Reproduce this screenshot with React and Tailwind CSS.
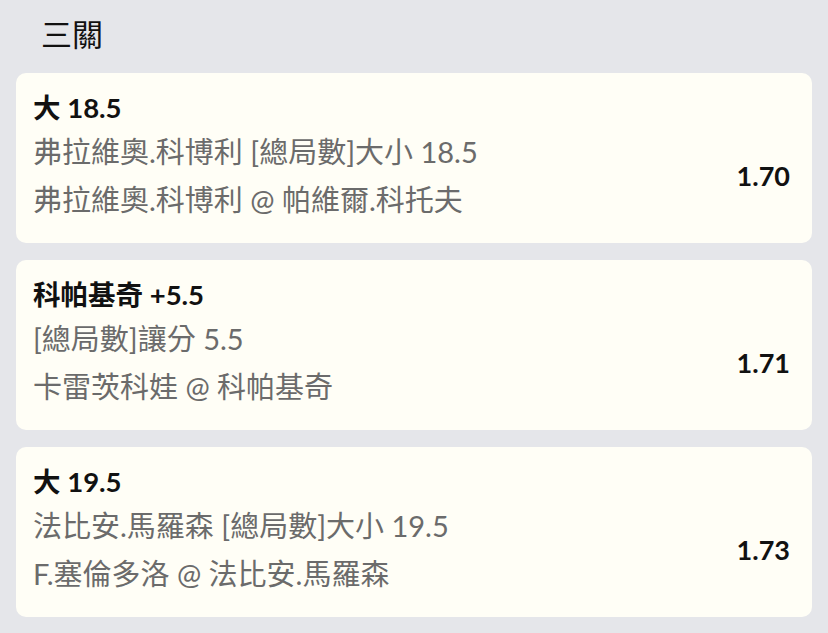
import React from 'react';

const bets = [
  {
    title: '大 18.5',
    market: '弗拉維奧.科博利 [總局數]大小 18.5',
    match: '弗拉維奧.科博利 @ 帕維爾.科托夫',
    odds: '1.70',
  },
  {
    title: '科帕基奇 +5.5',
    market: '[總局數]讓分 5.5',
    match: '卡雷茨科娃 @ 科帕基奇',
    odds: '1.71',
  },
  {
    title: '大 19.5',
    market: '法比安.馬羅森 [總局數]大小 19.5',
    match: 'F.塞倫多洛 @ 法比安.馬羅森',
    odds: '1.73',
  },
];

export default function App() {
  return (
    <div className="w-[828px] h-[633px] overflow-hidden bg-[#e5e6ea] font-['Lato','Noto_Sans_CJK_TC',sans-serif]">
      <div className="pl-[41px] pt-[14px] pb-[19px] text-[31px] leading-[40px] text-[#111]">三關</div>

      <div className="flex flex-col gap-[17px] px-4">
        {bets.map((bet) => (
          <div key={bet.odds} className="h-[170px] bg-[#fffef6] rounded-[10px] pl-[17px] pr-[22px] pt-[15px]">
            <div className="text-[27.5px] leading-[40px] font-bold text-[#111]">{bet.title}</div>
            <div className="flex items-center justify-between">
              <div className="text-[29px] leading-[48px] text-[#6b6b6b]">
                <p>{bet.market}</p>
                <p>{bet.match}</p>
              </div>
              <div className="text-[27px] font-bold text-[#111]">{bet.odds}</div>
            </div>
          </div>
        ))}
      </div>
    </div>
  );
}
